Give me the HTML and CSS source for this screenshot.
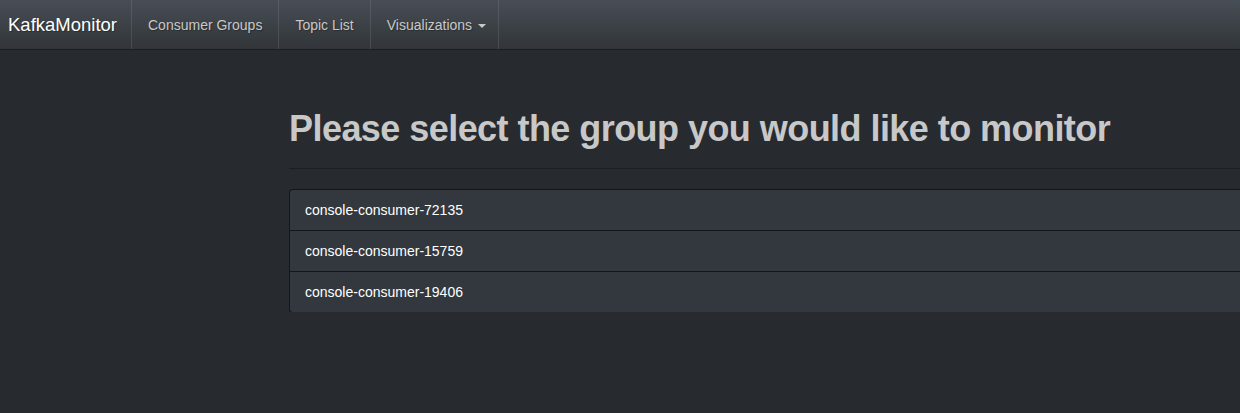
FILE: index.html
```html
<!DOCTYPE html>
<html lang="en">

<head>
    <meta charset="UTF-8">
    <meta name="viewport" content="width=device-width, initial-scale=1.0">
    <link rel="stylesheet" href="styles.css">
    <title>KafkaMonitor</title>
</head>

<body>
    <nav class="navbar">
        <a href="#" class="brand">KafkaMonitor</a>
        <ul class="nav-links">
            <li><a href="#">Consumer Groups</a></li>
            <li><a href="#">Topic List</a></li>
            <li><a href="#" class="last">Visualizations <span class="caret"></span></a></li>
        </ul>
    </nav>

    <div class="page">
        <div class="content">
            <div class="page-header">
                <h1>Please select the group you would like to monitor</h1>
            </div>
            <div class="list-group">
                <a href="#" class="list-item">console-consumer-72135</a>
                <a href="#" class="list-item">console-consumer-15759</a>
                <a href="#" class="list-item">console-consumer-19406</a>
            </div>
        </div>
    </div>
</body>

</html>
```

FILE: styles.css
```css
* {
    margin: 0;
    padding: 0;
    box-sizing: border-box;
}

body {
    background-color: #272b30;
    color: #c8c8c8;
    font-family: "Liberation Sans", Arial, Helvetica, sans-serif;
    font-size: 14px;
    line-height: 20px;
    overflow: hidden;
}

a {
    text-decoration: none;
}

/*--------navbar-------*/

.navbar {
    display: flex;
    height: 50px;
    background-image: linear-gradient(#484e55, #3a3f44 60%, #313539);
    border-bottom: 1px solid #1c1e22;
}

.brand {
    display: block;
    padding: 15px 14px 15px 8px;
    font-size: 18.5px;
    line-height: 19px;
    color: #fff;
    text-shadow: 1px 1px 1px rgba(0, 0, 0, 0.3);
}

.nav-links {
    display: flex;
    list-style-type: none;
}

.nav-links a {
    display: block;
    padding: 15px 16px 14px;
    height: 49px;
    color: #c8c8c8;
    text-shadow: 1px 1px 1px rgba(0, 0, 0, 0.3);
    border-left: 1px solid rgba(255, 255, 255, 0.1);
}

.nav-links a.last {
    padding-right: 12px;
    border-right: 1px solid rgba(255, 255, 255, 0.1);
}

.caret {
    display: inline-block;
    width: 0;
    height: 0;
    margin-left: 2px;
    vertical-align: middle;
    border-top: 4px solid;
    border-left: 4px solid transparent;
    border-right: 4px solid transparent;
}

/*--------content-------*/

.page {
    padding: 19px 0 0 289px;
}

.content {
    width: 1140px;
}

.page-header {
    margin: 40px 0 20px;
    padding-bottom: 9px;
    border-bottom: 1px solid #1c1e22;
}

h1 {
    margin-top: 20px;
    margin-bottom: 10px;
    font-size: 36px;
    line-height: 1.1;
    font-weight: 700;
    letter-spacing: -0.55px;
    color: #c8c8c8;
}

.list-group {
    display: flex;
    flex-direction: column;
}

.list-item {
    display: block;
    padding: 10px 15px;
    margin-bottom: -1px;
    background-color: #32383e;
    border: 1px solid rgba(0, 0, 0, 0.6);
    color: #fff;
}

.list-item:first-child {
    border-radius: 4px 4px 0 0;
}

.list-item:last-child {
    border-radius: 0 0 4px 4px;
}
```
